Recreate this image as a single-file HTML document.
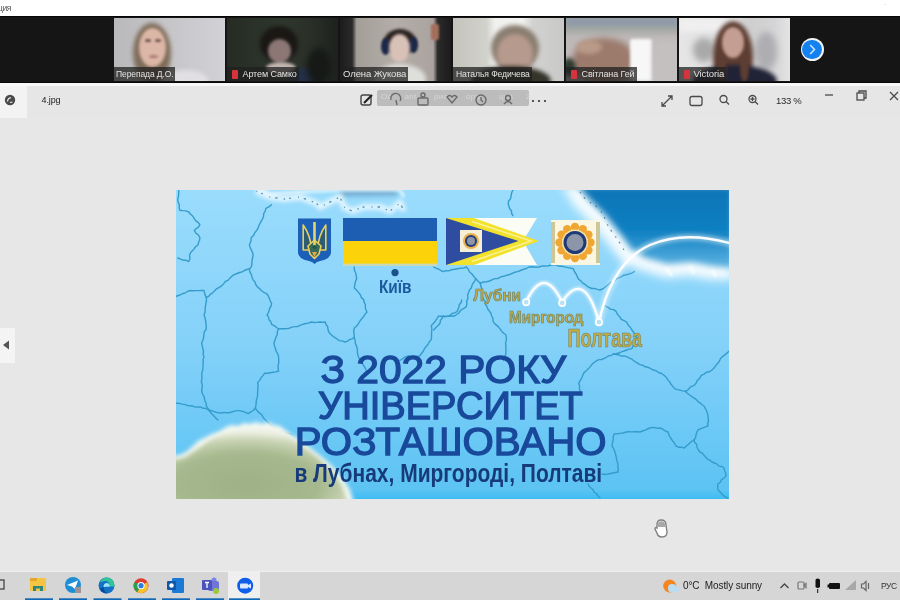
<!DOCTYPE html>
<html><head><meta charset="utf-8">
<style>
*{margin:0;padding:0;box-sizing:border-box}
html,body{width:900px;height:600px;overflow:hidden;background:#e7e7e7;font-family:"Liberation Sans",sans-serif}
.abs{position:absolute}
#top{left:0;top:0;width:900px;height:16px;background:#fff}
#strip{left:0;top:16px;width:900px;height:67px;background:#151515;border-top:1px solid #050505;border-bottom:1px solid #070707}
.tile{position:absolute;top:18px;height:63px;width:111px;overflow:hidden}
.tile i{position:absolute;display:block;border-radius:50%}
.nm{position:absolute;left:0;top:49px;height:14px;font-size:9px;color:#e2e2e2;background:rgba(32,32,32,.75);padding:0 2px 0 2px;line-height:14px;white-space:nowrap;letter-spacing:-0.1px}
.mic{display:inline-block;width:5.5px;height:9px;background:#d8333a;vertical-align:-1.5px;margin:0 5px 0 3px;border-radius:1px}
#tb{left:0;top:83px;width:900px;height:35px;background:#e6e6e6;border-top:3px solid #f8f8f8}
#task{left:0;top:571px;width:900px;height:29px;background:#d6d6d6;border-top:1px solid #eeeeee}
svg{position:absolute;left:0;top:0}
</style></head><body>
<div id="wrap" style="position:absolute;left:0;top:0;width:900px;height:600px;filter:blur(0.35px)">

<div id="top" class="abs"><span style="position:absolute;left:-2px;top:3px;font-size:8.5px;color:#555;letter-spacing:-0.4px">ция</span>
<span style="position:absolute;left:884px;top:1px;font-size:7px;color:#bbb">·</span></div>
<div id="strip" class="abs"></div>
<!-- tile 1 -->
<div class="tile" style="left:114px;background:linear-gradient(90deg,#b9b8bb,#c6c5c8 50%,#cdcdd1 80%,#d2d2d6)">
 <i style="left:19px;top:5px;width:38px;height:60px;background:#7f6d5a;filter:blur(2px)"></i>
 <i style="left:25px;top:10px;width:27px;height:39px;background:#dcb6a6;filter:blur(1.5px)"></i>
 <i style="left:31px;top:21px;width:6px;height:3px;background:#6c5650;filter:blur(.8px)"></i>
 <i style="left:41px;top:21px;width:6px;height:3px;background:#6c5650;filter:blur(.8px)"></i>
 <i style="left:35px;top:37px;width:9px;height:3px;background:#b07c78;filter:blur(.8px)"></i>
 <i style="left:50px;top:52px;width:44px;height:22px;background:#e2dfe4;filter:blur(2px)"></i>
 <div class="nm" style="font-size:8.5px">Перепада Д.О.</div>
</div>
<!-- tile 2 -->
<div class="tile" style="left:227px;background:linear-gradient(90deg,#262c24,#2f372d 50%,#2a3028 75%,#1e211e)">
 <i style="left:33px;top:8px;width:38px;height:36px;background:#1a1715;filter:blur(2px)"></i>
 <i style="left:41px;top:21px;width:23px;height:24px;background:#8c7774;filter:blur(1.5px)"></i>
 <i style="left:39px;top:44px;width:30px;height:12px;background:#c2b4ae;filter:blur(1.5px)"></i>
 <i style="left:58px;top:50px;width:42px;height:30px;background:#243049;filter:blur(2px)"></i>
 <i style="left:80px;top:30px;width:24px;height:38px;background:#161916;filter:blur(3px)"></i>
 <div class="nm"><span class="mic"></span>Артем Самко</div>
</div>
<!-- tile 3 -->
<div class="tile" style="left:340px;background:linear-gradient(90deg,#1c1c1c 0,#2a2a2a 11%,#a49e98 15%,#b4aea8 50%,#aaa39f 84%,#2a2a2a 88%,#1c1c1c)">
 <i style="left:44px;top:11px;width:32px;height:26px;background:#2a2220;filter:blur(1.5px)"></i>
 <i style="left:41px;top:20px;width:9px;height:17px;background:#1d2848;filter:blur(1px)"></i>
 <i style="left:69px;top:19px;width:9px;height:16px;background:#1d2848;filter:blur(1px)"></i>
 <i style="left:49px;top:16px;width:21px;height:28px;background:#d9c1b8;filter:blur(1.5px)"></i>
 <i style="left:34px;top:46px;width:52px;height:30px;background:#dededa;filter:blur(2px)"></i>
 <i style="left:91px;top:6px;width:8px;height:16px;background:#a56e5a;border-radius:2px;filter:blur(1px)"></i>
 <div class="nm" style="font-size:9.5px;padding-left:3px">Олена Жукова</div>
</div>
<!-- tile 4 -->
<div class="tile" style="left:453px;background:linear-gradient(90deg,#c4c4bc 0,#d2d2cc 30%,#f0f0ee 38%,#f2f2f0 62%,#d2d2d0 72%,#c8c8c8)">
 <i style="left:38px;top:7px;width:48px;height:46px;background:#8a7e70;filter:blur(2px)"></i>
 <i style="left:44px;top:16px;width:36px;height:40px;background:#b79a8e;filter:blur(2px)"></i>
 <i style="left:18px;top:48px;width:80px;height:30px;background:#35342b;filter:blur(2px)"></i>
 <div class="nm" style="font-size:8.6px;padding-left:3px">Наталья Федичева</div>
</div>
<!-- tile 5 -->
<div class="tile" style="left:566px;background:linear-gradient(180deg,#9aa3a6 0,#a3a9a4 18%,#bdb8b8 30%,#c6c2c2)">
 <i style="left:0;top:0;width:111px;height:8px;border-radius:0;background:#8f9aa8;filter:blur(2px)"></i>
 <i style="left:6px;top:20px;width:64px;height:46px;background:#9c7a6c;filter:blur(3px)"></i>
 <i style="left:10px;top:22px;width:26px;height:14px;background:#b99a88;filter:blur(2px)"></i>
 <i style="left:-4px;top:40px;width:14px;height:18px;background:#2f3a2e;filter:blur(2px)"></i>
 <i style="left:64px;top:21px;width:22px;height:42px;background:#f7f7f7;border-radius:2px;filter:blur(1.5px)"></i>
 <i style="left:88px;top:22px;width:24px;height:42px;background:#c4c0c0;border-radius:2px;filter:blur(3px)"></i>
 <div class="nm"><span class="mic"></span>Світлана Гей</div>
</div>
<!-- tile 6 -->
<div class="tile" style="left:679px;background:linear-gradient(90deg,#e6e6e6 0,#dedede 35%,#cfcfd0 65%,#d4d4d6 85%,#e4e4e4)">
 <i style="left:0;top:0;width:60px;height:14px;border-radius:0;background:#f0f0f0;filter:blur(3px)"></i>
 <i style="left:14px;top:20px;width:22px;height:24px;background:#a9a9a9;filter:blur(3px)"></i>
 <i style="left:76px;top:14px;width:22px;height:38px;background:#aeaeb2;filter:blur(3px)"></i>
 <i style="left:34px;top:3px;width:40px;height:72px;background:#5e3e32;filter:blur(2px)"></i>
 <i style="left:43px;top:9px;width:22px;height:31px;background:#c49e92;filter:blur(1.5px)"></i>
 <i style="left:14px;top:47px;width:84px;height:32px;background:#202236;filter:blur(2px)"></i>
 <i style="left:38px;top:36px;width:9px;height:28px;background:#5e3e32;filter:blur(1.5px)"></i>
 <i style="left:61px;top:36px;width:9px;height:28px;background:#5e3e32;filter:blur(1.5px)"></i>
 <div class="nm" style="font-size:9.5px"><span class="mic" style="margin-right:4px"></span>Victoria</div>
</div>
<div class="abs" style="left:800.5px;top:38px;width:23px;height:23px;border-radius:50%;background:#f4f4f4"></div>
<div class="abs" style="left:802.3px;top:39.8px;width:19.4px;height:19.4px;border-radius:50%;background:#1482ee"></div>
<svg width="900" height="600" style="position:absolute;left:0;top:0"><path d="M810.2,45 L814.5,49.5 L810.2,54" fill="none" stroke="#cfe6ff" stroke-width="1.5"/></svg>
<!-- toolbar -->
<div id="tb" class="abs"></div>
<div class="abs" style="left:0;top:86px;width:27px;height:32px;background:#f3f3f3"></div>
<div class="abs" style="left:41.5px;top:95px;font-size:9px;color:#222;letter-spacing:-.1px">4.jpg</div>
<div class="abs" style="left:377px;top:90px;width:152px;height:16px;background:#bcbcbc;border-radius:2px"></div>
<div class="abs" style="left:381px;top:92px;font-size:8px;color:#d6d6d6;white-space:nowrap;letter-spacing:.3px">Oc  &nbsp; &nbsp; ant &nbsp; &nbsp; &nbsp; рия &nbsp; &nbsp; &nbsp; орм &nbsp; &nbsp; &nbsp; ция  &nbsp; &nbsp; 2</div>
<div class="abs" style="left:776px;top:95px;font-size:9.5px;color:#2a2a2a;letter-spacing:-.3px">133 %</div>
<!-- left nav button -->
<div class="abs" style="left:0;top:328px;width:15px;height:35px;background:#f4f4f4"></div>
<!-- taskbar -->
<div id="task" class="abs"></div>
<div class="abs" style="left:228px;top:572px;width:32px;height:28px;background:#efefef"></div>
<div class="abs" style="left:683px;top:580px;font-size:10px;color:#222;white-space:nowrap;letter-spacing:-.1px">0°C&nbsp; Mostly sunny</div>
<div class="abs" style="left:881px;top:581px;font-size:8.5px;color:#333;white-space:nowrap;letter-spacing:-.4px">РУС</div>


<svg width="900" height="600" viewBox="0 0 900 600">
<defs>
 <linearGradient id="bg" x1="0" y1="0" x2="0" y2="1">
  <stop offset="0" stop-color="#9adcfc"/>
  <stop offset="0.5" stop-color="#84d1f9"/>
  <stop offset="0.97" stop-color="#5cc3f3"/>
  <stop offset="1" stop-color="#3dbcf3"/>
 </linearGradient>
 <clipPath id="sc"><rect x="176" y="190" width="553" height="309"/></clipPath>
 <filter id="bl3" x="-50%" y="-50%" width="200%" height="200%"><feGaussianBlur stdDeviation="3"/></filter>
 <filter id="bl2" x="-50%" y="-50%" width="200%" height="200%"><feGaussianBlur stdDeviation="2"/></filter>
 <filter id="bl1" x="-50%" y="-50%" width="200%" height="200%"><feGaussianBlur stdDeviation="1"/></filter>
 <linearGradient id="dk" x1="0" y1="0" x2="0" y2="1">
  <stop offset="0" stop-color="#0a74b6"/>
  <stop offset="0.55" stop-color="#0f80c2"/>
  <stop offset="1" stop-color="#5fb4e2"/>
 </linearGradient>
</defs>
<g clip-path="url(#sc)">
 <rect x="176" y="190" width="553" height="309" fill="url(#bg)"/>
 <g fill="none" stroke="#359ccb" stroke-width="1.4" stroke-linejoin="round" stroke-linecap="round">
 <path d="M178.8,190.0 L178.7,193.1 L178.5,196.2 L177.8,199.2 L178.1,202.0 L179.3,204.6 L179.2,207.5 L179.7,210.2 L182.8,210.6 L185.9,210.9 L188.8,212.0 L190.6,214.3 L192.9,216.3 L194.4,218.9 L196.2,221.2 L198.4,222.7 L199.9,224.9 L198.4,227.1 L196.2,228.6 L194.3,230.4 L195.9,233.1 L198.4,235.0 L199.9,237.7 L199.6,240.2 L198.5,242.5 L198.0,245.0 L195.8,246.5 L194.3,248.6 L192.6,250.6 L190.7,252.4 L189.5,255.4 L190.0,258.6 L188.8,261.6 L186.2,260.3 L183.2,260.0 L180.4,259.2 L177.8,257.9"/>
<path d="M271.4,204.7 L268.9,206.9 L265.9,208.3 L265.2,211.1 L263.7,213.7 L263.5,216.7 L262.2,219.4 L260.7,222.1 L259.3,224.8 L258.2,227.7 L256.7,230.4 L254.8,232.8 L253.5,235.6 L251.2,237.7 L251.1,240.3 L250.3,242.7 L249.4,245.0 L250.4,248.1 L251.9,251.1 L253.1,254.2 L252.9,256.8 L252.2,259.3 L252.0,261.9 L251.8,264.6 L251.2,267.1 L249.4,268.9"/>
<path d="M249.4,268.9 L246.8,269.5 L244.4,270.5 L242.2,271.9 L239.6,272.5 L237.1,273.5 L234.7,274.4 L232.2,275.9 L230.1,277.9 L228.3,280.1 L225.5,281.3 L223.7,283.6 L221.7,285.8 L219.2,287.3 L216.6,288.8 L214.5,290.9 L212.7,292.9 L210.4,294.2 L208.7,296.3 L206.3,297.5"/>
<path d="M176.0,296.3 L178.4,295.5 L180.8,294.7 L183.0,293.5 L185.5,292.8 L187.6,291.3 L190.0,290.5 L192.8,290.7 L195.6,290.6 L198.4,290.6 L201.2,290.4 L204.0,290.5 L204.8,294.1 L206.3,297.5"/>
<path d="M249.4,268.9 L249.8,271.8 L251.3,274.4 L252.0,277.2 L253.1,279.9 L255.0,282.0 L255.9,284.8 L257.6,287.0 L259.8,288.9 L261.9,291.0 L264.4,292.6 L267.0,294.0 L268.4,296.2 L269.4,298.6 L270.3,301.1 L271.6,303.3 L271.2,305.8 L269.8,308.0 L269.2,310.5 L268.3,312.8 L267.0,315.0 L268.6,317.1 L269.0,319.8 L270.8,321.8 L271.6,324.3 L274.1,325.6 L276.3,327.3 L278.6,329.0 L277.3,331.7 L277.2,334.8 L275.9,337.4 L274.9,340.2 L274.0,343.0 L274.5,345.9 L275.5,348.7 L276.3,351.5 L277.9,354.1 L278.6,357.0 L278.7,359.8 L278.8,362.6 L278.1,365.4 L278.1,368.2 L278.6,371.0 L275.9,371.9 L273.1,372.3 L270.3,372.7 L267.5,373.2 L264.6,373.3 L262.9,375.6 L261.0,377.9 L259.6,380.4 L257.6,382.6 L258.2,385.4 L257.7,388.2 L257.8,391.0 L257.5,393.8 L257.6,396.6 L256.5,399.4 L256.2,402.4 L255.9,405.4 L255.3,408.3 L257.1,410.5 L258.9,412.7 L261.4,414.4 L262.9,416.9 L264.7,419.3 L266.9,421.3 L268.9,423.5 L271.0,425.6 L273.4,427.4 L276.3,428.7 L279.1,430.2 L281.9,431.7 L284.7,432.0 L287.1,433.4 L289.9,433.5 L292.4,434.8"/>
<path d="M206.3,297.5 L206.5,300.1 L206.0,302.5 L205.7,305.1 L205.2,307.5 L205.2,310.1 L204.9,312.6 L204.0,315.0 L205.0,317.8 L205.6,320.7 L205.9,323.7 L206.3,326.6 L206.1,329.5 L204.3,331.9 L203.9,334.8 L203.6,337.6 L202.8,340.3 L201.7,343.0 L202.3,345.8 L202.8,348.6 L203.5,351.3 L203.1,354.3 L204.0,357.0 L203.0,359.6 L203.3,362.4 L202.9,365.2 L203.0,367.9 L202.6,370.7 L201.7,373.3 L201.9,376.0 L202.0,378.7 L201.3,381.5 L202.1,384.2 L202.3,386.9 L201.7,389.6 L201.9,392.5 L203.2,395.0 L204.4,397.6 L204.7,400.5 L206.1,403.0 L206.3,405.9 L208.0,408.3 L209.3,410.9 L211.2,413.2 L213.3,415.3 L215.5,417.8 L218.0,420.0"/>
<path d="M176.3,403.2 L179.2,403.4 L182.0,404.1 L184.8,404.4 L187.5,405.6 L190.4,405.8 L193.2,406.3 L195.7,407.1 L198.3,406.9 L200.9,407.2 L203.3,408.3 L205.9,408.4 L208.3,409.8 L210.8,410.5 L213.4,411.3 L215.9,412.2 L218.6,412.7 L221.2,413.0 L223.8,412.4 L226.5,412.7 L229.1,412.7 L231.7,412.0 L234.3,411.1 L236.9,410.6 L239.7,410.6 L242.6,411.4 L245.4,412.4 L248.1,413.7 L250.6,412.1 L253.2,410.5 L255.3,408.3"/>
<path d="M278.6,329.0 L281.3,328.6 L284.0,328.8 L286.7,328.6 L289.4,328.2 L291.9,327.1 L294.6,326.6 L297.3,326.6 L300.0,325.4 L302.8,324.4 L305.6,323.5 L308.5,323.1 L311.3,322.0 L314.1,322.5 L316.9,322.4 L319.7,322.0 L322.5,322.2 L325.3,322.0 L325.9,324.5 L327.6,326.5 L327.9,329.0 L328.6,331.5 L330.0,333.6 L332.1,335.6 L334.4,337.3 L336.9,338.8 L339.2,340.6 L342.2,340.9 L345.0,342.0 L347.5,341.1 L349.6,339.5 L352.1,338.8 L354.3,337.3"/>
<path d="M354.3,267.0 L354.3,270.0 L355.6,272.8 L356.2,275.7 L356.7,278.6 L355.4,281.6 L354.8,284.8 L354.3,288.0 L356.5,290.1 L358.4,292.4 L360.3,294.7 L361.4,297.6 L363.7,299.6 L364.0,302.2 L365.4,304.5 L365.3,307.1 L365.8,309.7 L367.0,312.0 L365.1,314.1 L363.6,316.6 L361.7,318.7 L360.0,321.0 L358.4,323.6 L356.7,326.0 L354.3,328.0 L353.7,331.1 L354.1,334.2 L354.3,337.3 L355.1,340.4 L355.4,343.6 L356.7,346.6 L357.4,349.5 L357.4,352.5 L358.0,355.5 L359.0,358.3 L360.7,360.5 L362.1,362.8 L363.4,365.2 L364.9,367.5 L366.0,370.0"/>
<path d="M433.6,267.0 L435.9,268.2 L438.4,269.0 L440.7,270.4 L443.0,271.6 L445.8,270.6 L448.9,270.9 L451.7,269.7 L454.6,269.3 L457.5,268.7 L460.5,268.2 L463.5,268.1 L466.3,267.0 L468.2,269.3 L469.6,272.0 L471.9,274.0 L473.7,276.3 L475.6,278.6 L477.9,281.0 L480.3,283.3 L483.3,282.0 L486.5,281.7 L489.6,281.0 L492.3,279.7 L495.0,278.6 L498.1,278.5 L500.7,276.9 L503.6,276.3 L506.4,275.3 L509.3,274.7 L512.0,273.5 L514.7,272.3 L517.6,271.6 L520.5,270.5 L523.3,269.4 L526.3,268.5 L529.0,267.0 L532.5,266.7 L536.0,267.3 L538.7,267.0 L541.3,266.3 L544.0,265.9 L546.7,266.1 L549.4,265.5 L552.0,265.1 L554.7,264.7 L557.3,265.6 L559.9,266.3 L562.7,266.3 L565.3,267.1 L568.0,267.6 L570.6,268.1 L573.3,268.7 L574.4,271.5 L576.1,274.0 L577.3,276.7 L578.7,279.3 L580.8,280.9 L582.6,282.9 L584.9,284.3 L586.9,286.1 L589.3,287.3 L591.8,288.5 L594.7,288.4 L597.3,289.4 L600.0,290.0 L603.0,288.7 L605.6,286.8 L608.0,284.7 L610.0,283.0 L612.2,281.6 L614.6,280.6 L616.6,278.9 L618.9,277.8 L621.3,276.7 L623.8,275.1 L626.7,274.7 L629.4,273.8 L632.1,272.8 L634.6,271.3"/>
<path d="M475.6,278.6 L474.8,281.1 L473.0,283.2 L471.9,285.5 L471.3,288.1 L469.4,290.1 L468.6,292.6 L467.6,295.3 L468.0,298.3 L466.7,300.9 L466.9,303.8 L466.3,306.6 L464.4,308.2 L462.0,309.3 L460.2,311.0 L458.8,313.2 L456.6,314.5 L454.6,316.0 L451.7,316.0 L448.8,316.2 L445.9,316.4 L443.0,316.0 L442.0,318.4 L440.4,320.5 L440.0,323.2 L438.3,325.3 L435.9,327.6 L433.6,330.0"/>
<path d="M480.3,283.3 L480.8,286.1 L481.8,288.8 L481.9,291.7 L482.0,294.5 L482.6,297.3 L483.8,299.6 L485.4,301.7 L485.6,304.6 L487.0,306.8 L487.9,309.2 L489.6,311.3 L491.0,313.5 L491.7,316.0 L492.9,318.3 L493.0,321.0 L494.3,323.3 L496.4,325.1 L498.5,326.9 L500.2,329.1 L501.8,331.4 L503.8,333.3 L506.0,335.0 L506.3,337.7 L506.4,340.4 L505.5,343.1 L505.9,345.9 L505.8,348.6 L506.0,351.3 L505.7,354.5 L504.9,357.6 L503.6,360.6"/>
<path d="M512.9,190.0 L511.7,192.7 L511.1,195.6 L510.6,198.6 L508.6,201.0 L508.2,204.0 L509.0,206.4 L509.7,208.8 L511.5,210.8 L511.6,213.4 L512.9,215.6"/>
<path d="M461.6,300.0 L461.2,302.5 L459.4,304.5 L458.9,307.0 L458.1,309.4 L457.0,311.7 L454.6,312.8 L452.1,313.5 L450.1,315.4 L447.6,316.3 L444.5,316.7 L441.4,316.3 L438.3,316.3 L436.8,318.8 L435.2,321.2 L433.4,323.5 L431.3,325.6 L431.8,328.4 L431.7,331.2 L431.5,334.0 L431.5,336.8 L431.3,339.6 L429.3,341.8 L428.0,344.5 L426.0,346.6 L424.3,349.0 L423.1,351.5 L421.3,353.8 L419.6,356.0 L416.7,356.6 L413.8,356.3 L410.9,356.6 L408.0,356.0 L405.5,356.9 L403.3,358.2 L401.1,359.8 L398.6,360.6"/>
<path d="M605.3,306.0 L608.0,307.3 L610.4,309.1 L613.5,309.6 L616.0,311.3 L617.4,314.2 L619.6,316.6 L621.3,319.3 L624.0,320.6 L626.6,322.0 L628.1,324.9 L630.3,327.3 L632.0,330.0 L633.8,332.7 L635.3,335.5 L637.3,338.0 L635.5,340.4 L634.8,343.4 L633.0,345.8 L632.0,348.6 L629.3,349.1 L626.6,350.0 L624.0,351.0 L621.4,351.9 L618.8,353.0 L616.1,353.7 L613.3,354.0"/>
<path d="M613.3,354.0 L611.2,355.5 L608.5,355.7 L606.4,357.3 L604.1,358.4 L601.8,359.5 L599.1,359.6 L596.8,360.6 L594.6,362.0 L592.3,364.0 L590.5,366.4 L588.5,368.6 L586.3,370.7 L584.0,372.6 L582.7,375.3 L581.7,378.1 L580.1,380.7 L578.7,383.3 L579.6,385.9 L579.5,388.8 L580.1,391.5 L581.3,394.0"/>
<path d="M613.3,354.0 L615.9,354.6 L618.7,354.7 L621.2,356.1 L624.0,355.9 L626.6,356.6 L628.9,357.8 L631.4,358.8 L633.4,360.5 L635.5,361.9 L637.8,363.3 L640.0,364.6 L642.8,365.3 L645.3,366.8 L648.2,367.3 L650.7,368.7 L653.3,370.0 L656.2,370.9 L658.7,372.5 L661.6,373.5 L664.0,375.3 L666.2,377.2 L667.7,379.6 L669.6,381.8 L671.0,384.2 L672.8,386.4 L674.6,388.6 L677.2,389.6 L679.9,390.1 L682.6,390.9 L685.3,391.3 L687.7,390.1 L689.5,388.0 L691.6,386.3 L694.2,385.4 L696.0,383.3 L697.4,380.4 L699.8,378.1 L701.3,375.3 L704.1,374.1 L706.4,372.2 L709.5,371.7 L712.0,370.0 L714.1,368.1 L715.7,365.6 L717.5,363.5 L719.4,361.3 L720.5,358.6 L722.6,356.6 L724.8,354.9 L726.9,353.1 L729.0,351.3"/>
<path d="M685.3,391.3 L687.2,393.2 L689.4,394.8 L691.5,396.4 L693.8,397.8 L696.0,399.3 L697.7,401.3 L699.9,402.8 L701.9,404.5 L704.0,406.0 L705.3,408.4 L706.5,410.8 L707.4,413.3 L708.0,416.0 L708.2,418.5 L708.5,421.0 L707.6,423.5 L708.0,426.0 L705.5,426.9 L702.9,427.9 L700.4,428.9 L698.0,430.0 L696.8,432.4 L696.0,435.0 L695.6,437.7 L694.0,440.0 L691.8,441.3 L689.8,443.0 L688.0,444.8 L686.0,446.4 L684.0,448.0 L681.4,447.1 L678.5,447.2 L676.0,446.0 L674.2,442.8 L672.0,440.0 L670.4,437.5 L668.9,434.9 L668.0,432.0 L665.2,430.9 L662.8,429.1 L660.0,428.0 L657.5,428.4 L655.0,427.7 L652.5,427.4 L650.0,428.0 L647.5,429.0 L645.1,430.1 L642.5,431.0 L640.0,432.0 L637.2,431.8 L634.4,431.7 L631.6,431.9 L628.8,431.8 L626.0,432.0 L623.1,433.0 L620.1,433.4 L617.0,433.8 L614.0,434.0 L613.2,437.0 L613.2,440.0 L612.4,443.0 L612.0,446.0 L613.5,448.3 L614.5,450.8 L615.3,453.4 L616.0,456.0 L616.5,458.7 L617.1,461.4 L618.0,464.0 L617.8,466.7 L618.3,469.3 L618.0,472.0 L615.5,472.5 L613.0,473.0 L610.5,473.5 L608.0,474.0 L605.0,474.5 L602.0,474.0"/>
<path d="M694.0,440.0 L694.8,442.6 L696.7,444.6 L697.1,447.5 L698.3,449.8 L700.0,452.0 L702.4,453.2 L704.0,455.3 L705.8,457.3 L707.6,459.1 L710.0,460.3 L712.0,462.0 L714.5,463.0 L717.0,464.1 L719.0,466.1 L721.8,466.5 L724.0,468.0 L724.6,470.7 L725.8,473.2 L726.0,476.0 L724.0,478.0 L721.6,479.6 L720.3,482.3 L718.0,484.0 L717.6,487.0 L718.0,490.0 L720.2,492.0 L722.1,494.3 L724.4,496.2 L727.0,497.8 L729.0,500.0"/>
<path d="M588.0,484.0 L589.1,486.3 L591.0,488.0 L593.0,489.7 L594.0,492.0 L596.4,493.6 L598.0,496.0 L600.0,498.0"/>
 </g>
 <!-- dark region top right -->
 <filter id="bl5" x="-50%" y="-50%" width="200%" height="200%"><feGaussianBlur stdDeviation="5"/></filter>
 <path d="M562,186 L733,186 L733,280 L712,280 L690,276 L666,278 L640,270 L622,262 L608,244 L592,224 L574,206 Z" fill="#fff" filter="url(#bl5)" opacity="0.9"/>
 <path d="M578,186 L733,186 L733,268 L712,266 L692,262 L668,264 L646,258 L632,250 L622,236 L606,216 L590,200 Z" fill="url(#dk)" filter="url(#bl3)"/>
 <path d="M580,192 L586,200 L596,206 L603,214 L607,224 L612,232 L618,240 L624,250" fill="none" stroke="#2f6f98" stroke-width="1.3" stroke-dasharray="1.5 5 2 6" opacity="0.7"/>
 <path d="M666,268 L672,276 M690,266 L694,274 M712,270 L716,276" fill="none" stroke="#fff" stroke-width="2.5" opacity="0.8" filter="url(#bl1)"/>
 <!-- white glow top (belarus border) -->
 <path d="M340,189 L396,189 L398,196 L340,197 Z" fill="#5f8fb6" opacity="0.55" filter="url(#bl2)"/>
 <path d="M256,191 L270,197 L284,199 L300,197 L316,203 L320,207 L340,197 L344,207 L352,211 L364,207 L380,207 L390,211 L400,203 L404,211" fill="none" stroke="#fff" stroke-width="6" opacity="0.75" filter="url(#bl2)"/>
 <path d="M256,191 L270,197 L284,199 L300,197 L316,203 L320,207 L340,197 L344,207 L352,211 L364,207 L380,207 L390,211 L400,203 L404,211" fill="none" stroke="#2f7fa8" stroke-width="1.3" stroke-dasharray="1.5 4 2 7 1 5 2.5 6" opacity="0.8"/>
 <path d="M256,190 L262,190 L270,194 L300,192 L340,190 L400,190 L404,197" fill="none" stroke="#fff" stroke-width="4" opacity="0.5" filter="url(#bl1)"/>
 <!-- hill -->
 <radialGradient id="hg" cx="0.42" cy="0.75" r="0.7">
  <stop offset="0" stop-color="#9fb287"/>
  <stop offset="0.6" stop-color="#a6b98e"/>
  <stop offset="0.85" stop-color="#c9d4b4"/>
  <stop offset="1" stop-color="#eef2e6"/>
 </radialGradient>
 <path d="M172,456 L180,455 L186,452 L192,447 L198,441 L204,438 L212,434 L220,431 L226,427 L232,425 L238,426 L244,423 L250,424 L256,422 L262,424 L268,422 L274,425 L280,426 L286,431 L292,435 L298,439 L306,444 L314,451 L322,457 L330,464 L338,472 L344,480 L350,490 L354,503 L172,503 Z" fill="#f4f8f0" filter="url(#bl2)"/>
 <path d="M172,460 L184,458 L196,450 L210,440 L226,432 L246,428 L266,428 L282,431 L298,443 L316,456 L332,471 L342,486 L348,503 L172,503 Z" fill="url(#hg)" filter="url(#bl2)"/>
 <!-- arcs -->
 <g fill="none" stroke="#fff" stroke-linecap="round">
  <path d="M526,302 Q544,264 562,302" stroke-width="5" opacity="0.45" filter="url(#bl1)"/>
  <path d="M562,302 Q584,268 599,322" stroke-width="5" opacity="0.45" filter="url(#bl1)"/>
  <path d="M526,302 Q544,264 562,302" stroke-width="2.4" opacity="0.9"/>
  <path d="M562,302 Q584,268 599,322" stroke-width="2.4" opacity="0.9"/>
  <path d="M599,322 Q612,262 650,245 Q685,230 733,244" stroke-width="6" opacity="0.5" filter="url(#bl2)"/>
  <path d="M599,322 Q612,262 650,245 Q685,230 733,244" stroke-width="2.4" opacity="0.95"/>
 </g>
 <g fill="#b9e2f7" stroke="#fff" stroke-width="1.6">
  <circle cx="526.2" cy="302.2" r="3.2"/>
  <circle cx="562.2" cy="302.9" r="3.2"/>
  <circle cx="598.9" cy="322.2" r="3.2"/>
 </g>
 <!-- coat of arms -->
 <path d="M298,218.5 L331,218.5 L331,252 Q331,259 320,261 Q316,262 314.5,264 Q313,262 309,261 Q298,259 298,252 Z" fill="#1c5fb6"/>
 <g stroke="#e6d060" stroke-width="1.6" stroke-linejoin="round">
  <path d="M303.2,225 L303.2,250 L311.5,250 Q311,236 303.2,225 Z" fill="#2d5d6e"/>
  <path d="M325.8,225 L325.8,250 L317.5,250 Q318,236 325.8,225 Z" fill="#2d5d6e"/>
  <path d="M308,246 L314.5,240 L321,246 L319,254 L314.5,258.5 L310,254 Z" fill="#3a6a58"/>
 </g>
 <rect x="313.2" y="222" width="2.6" height="24" fill="#e8d36a"/>
 <circle cx="314.5" cy="247" r="2" fill="#1f5a48"/>
 <path d="M312,252 L317,252 L314.5,257 Z" fill="#e4a850"/>
 <!-- flag -->
 <rect x="343" y="218" width="94" height="23" fill="#1d5eb2"/>
 <rect x="343" y="241" width="94" height="23" fill="#fcd20a"/>
 <rect x="343" y="263.5" width="94" height="2.5" fill="#d6d9a8" opacity="0.8"/>
 <!-- pennant -->
 <path d="M458,218 L537,218 L523,241 L537,265 L458,265 Z" fill="#fbfcf4"/>
 <path d="M446,218 L474,218 L539,241 L474,265 L446,265 Z" fill="#f3e22c"/>
 <path d="M472,221.5 L531,241 L472,261.5" fill="none" stroke="#fdf8c8" stroke-width="1.4" opacity="0.7"/>
 <path d="M446,218 L518.5,241 L446,265 Z" fill="#2f4da0"/>
 <rect x="460" y="230" width="22" height="22" fill="#f6efd8"/>
 <circle cx="471" cy="241" r="8" fill="#eab24a"/>
 <circle cx="471" cy="241" r="6" fill="#263c7e"/>
 <circle cx="471" cy="241" r="4" fill="#8c96a6"/>
 <!-- emblem -->
 <rect x="551" y="220" width="49" height="45" fill="#fbf6e2"/>
 <rect x="551" y="222" width="4" height="41" fill="#b9b27a" opacity="0.7"/>
 <rect x="596" y="222" width="4" height="41" fill="#b9b27a" opacity="0.7"/>
 <g fill="#f0a632"><ellipse cx="590.5" cy="242.5" rx="4.2" ry="4.2"/><ellipse cx="588.4" cy="250.2" rx="4.2" ry="4.2"/><ellipse cx="582.8" cy="255.9" rx="4.2" ry="4.2"/><ellipse cx="575.0" cy="258.0" rx="4.2" ry="4.2"/><ellipse cx="567.2" cy="255.9" rx="4.2" ry="4.2"/><ellipse cx="561.6" cy="250.2" rx="4.2" ry="4.2"/><ellipse cx="559.5" cy="242.5" rx="4.2" ry="4.2"/><ellipse cx="561.6" cy="234.8" rx="4.2" ry="4.2"/><ellipse cx="567.2" cy="229.1" rx="4.2" ry="4.2"/><ellipse cx="575.0" cy="227.0" rx="4.2" ry="4.2"/><ellipse cx="582.8" cy="229.1" rx="4.2" ry="4.2"/><ellipse cx="588.4" cy="234.8" rx="4.2" ry="4.2"/></g>
 <circle cx="575" cy="242.5" r="13" fill="#f6e2a8"/>
 <circle cx="575" cy="242.5" r="11.5" fill="#1f3a78"/>
 <circle cx="575" cy="242.5" r="8.5" fill="#8d95a9"/>
 <!-- kyiv -->
 <circle cx="395" cy="272.6" r="3.6" fill="#1c4f8c"/>
</g>
<g font-family="Liberation Sans" font-weight="bold">
 <text x="320.43" y="382.8" font-size="38.2" font-weight="normal" fill="#19499a" stroke="#19499a" stroke-width="1.3" textLength="245.78" lengthAdjust="spacingAndGlyphs">З 2022 РОКУ</text>
 <text x="318.0" y="419.3" font-size="38.2" font-weight="normal" fill="#19499a" stroke="#19499a" stroke-width="1.3" textLength="264.79" lengthAdjust="spacingAndGlyphs">УНІВЕРСИТЕТ</text>
 <text x="294.89" y="455.3" font-size="38.2" font-weight="normal" fill="#19499a" stroke="#19499a" stroke-width="1.3" textLength="311.7" lengthAdjust="spacingAndGlyphs">РОЗТАШОВАНО</text>
 <text x="294.4" y="481.5" font-size="26.2" fill="#163a7a" textLength="307.81" lengthAdjust="spacingAndGlyphs">в Лубнах, Миргороді, Полтаві</text>
 <text x="378.92" y="293.0" font-size="17.5" fill="#1a5a9c" textLength="32.59" lengthAdjust="spacingAndGlyphs">Київ</text>
 <text x="473.3" y="301.0" font-size="16.5" fill="#c2ab48" stroke="#6f8466" stroke-width="0.7" textLength="47.69" lengthAdjust="spacingAndGlyphs">Лубни</text>
 <text x="509.08" y="323.3" font-size="16.5" fill="#c2ab48" stroke="#6f8466" stroke-width="0.7" textLength="74.33" lengthAdjust="spacingAndGlyphs">Миргород</text>
 <text x="567.56" y="347.0" font-size="25" fill="#c2ab48" stroke="#6f8466" stroke-width="0.7" textLength="74.34" lengthAdjust="spacingAndGlyphs">Полтава</text>
</g>
</svg>


<svg width="900" height="600" style="position:absolute;left:0;top:0">
 <!-- toolbar left rotate icon -->
 <circle cx="10" cy="100" r="5.2" fill="#4a4a4a"/>
 <path d="M7.5,101.5 Q8,97.5 11,98 M10,102.5 L12.5,102" fill="none" stroke="#eee" stroke-width="1.2"/>
 <!-- edit icon -->
 <rect x="361" y="95" width="10" height="10" rx="2" fill="none" stroke="#444" stroke-width="1.4"/>
 <path d="M364,103 L372,95" stroke="#222" stroke-width="2.2"/>
 <!-- pill icons -->
 <g fill="none" stroke="#6a6a6a" stroke-width="1.4">
  <path d="M391,100 A5,5 0 1 1 400,101 M396,100 L397,105"/>
  <rect x="418" y="98" width="10" height="7" rx="1"/><circle cx="423" cy="95" r="2"/>
  <path d="M447,97 Q449.5,94 452,97 Q454.5,94 457,97 L452,103 Z"/>
  <circle cx="481" cy="100" r="5"/><path d="M481,97 L481,100 L483,102"/>
  <circle cx="508" cy="98" r="2.5"/><path d="M504,104 Q508,99 512,104"/>
 </g>
 <g fill="#333"><circle cx="533" cy="101" r="1.1"/><circle cx="539" cy="101" r="1.1"/><circle cx="545" cy="101" r="1.1"/></g>
 <!-- right toolbar icons -->
 <g fill="none" stroke="#4a4a4a" stroke-width="1.3">
  <path d="M662,106 L672,96 M668,96 L672,96 L672,100 M662,102 L662,106 L666,106"/>
  <rect x="690" y="96.5" width="12" height="9" rx="2"/>
  <circle cx="723.5" cy="99" r="3.5"/><path d="M726,101.5 L729,104.5"/>
  <circle cx="752.5" cy="99" r="3.5"/><path d="M755,101.5 L758,104.5 M750.5,99 L754.5,99 M752.5,97 L752.5,101"/>
  <path d="M825,95 L833,95"/>
  <rect x="857" y="93" width="7" height="7"/><path d="M859,93 L859,91 L866,91 L866,98 L864,98"/>
  <path d="M890,92 L898,100 M898,92 L890,100"/>
 </g>
 <!-- left nav arrow -->
 <path d="M3,345 L9,340.5 L9,349.5 Z" fill="#555"/>
 <!-- cursor hand -->
 <path d="M657,525 Q657,520 661,520 Q666,520 666,525 L667,532 Q667,537 662,537 Q658,537 657,533 L655,529 Q655,527 657,528 Z" fill="#fff" stroke="#808080" stroke-width="1.4"/>
 <path d="M658,524.5 Q658,521.2 661.3,521.2 Q664.8,521.2 665,524.5 L665.3,527 L658,527 Z" fill="#a8a8a8"/>
 <!-- taskbar icons -->
 <g>
  <!-- task view -->
  <rect x="-3" y="580" width="7" height="9" fill="none" stroke="#444" stroke-width="1.3"/>
  <!-- explorer -->
  <rect x="30" y="578" width="16" height="13" rx="1" fill="#f6c443"/>
  <rect x="30" y="578" width="7" height="3" fill="#e3a52a"/>
  <path d="M33,591 L33,586 L43,586 L43,591 L40,591 L40,588.5 L36,588.5 L36,591 Z" fill="#2c8780"/>
  <!-- telegram -->
  <circle cx="73" cy="585" r="8" fill="#1e8fd6"/>
  <path d="M67,585 L78,580.5 L75,589 L72,586.5 Z" fill="#fff"/>
  <rect x="75" y="587" width="6" height="6" fill="#9c9494"/>
  <!-- edge -->
  <circle cx="106.5" cy="585.5" r="8" fill="#1371c8"/>
  <path d="M106.5,577.5 A8,8 0 0 1 114.5,585.5 L114.5,586.5 L110,586.5 Q110,582 106,581 Q103,580.5 100,582.5 Q102,577.5 106.5,577.5 Z" fill="#2fc596"/>
  <path d="M103.5,587 Q103.5,583 107,583 Q110,583.5 110,586.5 Z" fill="#9be3f5"/>
  <path d="M100,588.5 Q102,593.5 107.5,593.5 Q104,592 103.5,587 Z" fill="#0a4a94"/>
  <!-- chrome -->
  <circle cx="141" cy="585.7" r="7.5" fill="#de3e30"/>
  <path d="M141,585.7 L134.5,582 A7.5,7.5 0 0 0 137.3,592.2 Z" fill="#2d9e4a"/>
  <path d="M141,585.7 L137.3,592.2 A7.5,7.5 0 0 0 148,588 L147.5,582 Z" fill="#f7c22a"/>
  <circle cx="141" cy="585.7" r="3.6" fill="#fff"/>
  <circle cx="141" cy="585.7" r="2.6" fill="#2f7be0"/>
  <!-- outlook -->
  <rect x="172" y="578" width="12" height="15" rx="1" fill="#1b7ad6"/>
  <rect x="167" y="581" width="9" height="9" rx="1" fill="#0f57a8"/>
  <circle cx="171.5" cy="585.5" r="2.2" fill="#fff"/>
  <!-- teams -->
  <circle cx="214" cy="580" r="2.5" fill="#7b83eb"/>
  <rect x="208" y="581" width="11" height="10" rx="2" fill="#6f74d6"/>
  <rect x="202" y="580" width="10" height="10" rx="1" fill="#4b53bc"/>
  <path d="M205,582.5 L209,582.5 M207,582.5 L207,588" stroke="#fff" stroke-width="1.3"/>
  <circle cx="216" cy="591" r="3" fill="#9bc83c"/>
  <!-- zoom -->
  <circle cx="245.2" cy="585.7" r="8" fill="#0e5eea"/>
  <rect x="240" y="583.5" width="8" height="5" rx="1" fill="#dbe6ff"/>
  <path d="M248,585 L251,583.5 L251,588.5 L248,587 Z" fill="#dbe6ff"/>
 </g>
 <g fill="#1068b6">
  <rect x="25" y="598.3" width="28" height="1.7"/>
  <rect x="59" y="598.3" width="28" height="1.7"/>
  <rect x="93.5" y="598.3" width="28" height="1.7"/>
  <rect x="128" y="598.3" width="28" height="1.7"/>
  <rect x="162" y="598.3" width="28" height="1.7"/>
  <rect x="196" y="598.3" width="28" height="1.7"/>
  <rect x="229" y="598.3" width="31" height="1.7"/>
 </g>
 <!-- weather -->
 <circle cx="669.7" cy="586" r="6.5" fill="#f5861f"/>
 <path d="M668,588 Q668,584 672,584 Q676,584 676.5,587 Q679,587 679,589.5 Q679,592 676,592 L670,592 Q668,592 668,588 Z" fill="#b9def3"/>
 <!-- tray -->
 <g fill="none" stroke="#444" stroke-width="1.3">
  <path d="M780.5,588 L784.5,584 L788.5,588"/>
 </g>
 <g fill="none" stroke="#777" stroke-width="1.2">
  <rect x="798" y="582" width="6" height="7" rx="1"/><path d="M804,585 L806,583.5 L806,587.5 Z"/>
 </g>
 <path d="M815.5,580 Q815.5,578.5 817.7,578.5 Q820,578.5 820,580 L820,587 Q817.7,589 815.5,587 Z M817.2,589 L818.2,589 L818.2,593 L817.2,593 Z" fill="#111"/>
 <rect x="829" y="583" width="11" height="6" rx="1" fill="#111"/><rect x="827.5" y="584.5" width="1.5" height="3" fill="#111"/>
 <path d="M845,590 L856,590 L856,580 Z" fill="#a8a8a8"/>
 <g fill="none" stroke="#666" stroke-width="1.2">
  <path d="M861.5,584 L863.5,584 L866,581.5 L866,590.5 L863.5,588 L861.5,588 Z M868.5,583 L868.5,589"/>
 </g>
</svg>

</div>
</body></html>
